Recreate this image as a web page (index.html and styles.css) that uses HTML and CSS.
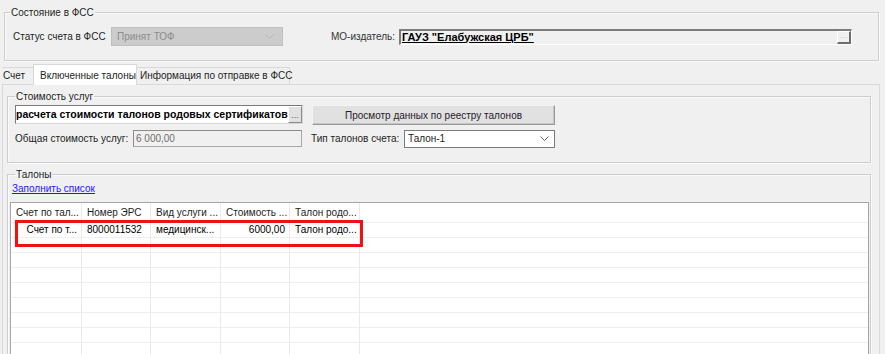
FILE: index.html
```html
<!DOCTYPE html>
<html lang="ru">
<head>
    <meta charset="UTF-8">
    <meta name="viewport" content="width=device-width, initial-scale=1.0">
    <title>Счет ФСС - Включенные талоны</title>
    <link rel="stylesheet" href="styles.css">
</head>
<body>
<div class="window">
    <fieldset class="group fss">
        <legend>Состояние в ФСС</legend>
        <div class="row">
            <span class="label status-label">Статус счета в ФСС</span>
            <div class="combo disabled status-combo">
                <span>Принят ТОФ</span>
                <svg width="9" height="5" viewBox="0 0 9 5"><polyline points="0.5,0.5 4.5,4.5 8.5,0.5" fill="none" stroke="#b4b4b4"/></svg>
            </div>
            <span class="label mo-label">МО-издатель:</span>
            <div class="field sunken mo-field">
                <span class="value bold underline">ГАУЗ "Елабужская ЦРБ"</span>
                <span class="dots-btn dim">...</span>
            </div>
        </div>
    </fieldset>

    <!-- Tabs -->
    <div class="tabs">
        <div class="tab tab-account">Счет</div>
        <div class="tab tab-talons active">Включенные талоны</div>
        <div class="tab tab-send">Информация по отправке в ФСС</div>
    </div>

    <div class="tab-page">
        <fieldset class="group cost">
            <legend>Стоимость услуг</legend>
            <div class="row row-first">
                <div class="field calc-field">
                    <span class="value bold">расчета стоимости талонов родовых сертификатов</span>
                    <span class="dots-btn">...</span>
                </div>
                <div class="btn view-btn">Просмотр данных по реестру талонов</div>
            </div>
            <div class="row row-second">
                <span class="label total-label">Общая стоимость услуг:</span>
                <div class="field readonly total-field">6 000,00</div>
                <span class="label type-label">Тип талонов счета:</span>
                <div class="combo type-combo">
                    <span>Талон-1</span>
                    <svg width="9" height="5" viewBox="0 0 9 5"><polyline points="0.5,0.5 4.5,4.5 8.5,0.5" fill="none" stroke="#606060"/></svg>
                </div>
            </div>
        </fieldset>

        <fieldset class="group talons">
            <legend>Талоны</legend>
            <a class="link" href="#">Заполнить список</a>
            <div class="grid">
                <table>
                    <colgroup>
                        <col class="c1"><col class="c2"><col class="c3"><col class="c4"><col class="c5"><col>
                    </colgroup>
                    <thead>
                        <tr>
                            <th>Счет по тал...</th>
                            <th>Номер ЭРС</th>
                            <th>Вид услуги ...</th>
                            <th>Стоимость ...</th>
                            <th>Талон родо...</th>
                            <th class="filler"></th>
                        </tr>
                    </thead>
                    <tbody>
                        <tr>
                            <td class="num">Счет по т...</td>
                            <td>8000011532</td>
                            <td>медицинск...</td>
                            <td class="num">6000,00</td>
                            <td>Талон родо...</td>
                            <td class="filler"></td>
                        </tr>
                        <tr><td></td><td></td><td></td><td></td><td></td><td class="filler"></td></tr>
                        <tr><td></td><td></td><td></td><td></td><td></td><td class="filler"></td></tr>
                        <tr><td></td><td></td><td></td><td></td><td></td><td class="filler"></td></tr>
                        <tr><td></td><td></td><td></td><td></td><td></td><td class="filler"></td></tr>
                        <tr><td></td><td></td><td></td><td></td><td></td><td class="filler"></td></tr>
                        <tr><td></td><td></td><td></td><td></td><td></td><td class="filler"></td></tr>
                        <tr><td></td><td></td><td></td><td></td><td></td><td class="filler"></td></tr>
                        <tr><td></td><td></td><td></td><td></td><td></td><td class="filler"></td></tr>
                    </tbody>
                </table>
                <!-- red annotation frame over the first row -->
                <div class="highlight"></div>
            </div>
        </fieldset>
    </div>
</div>
</body>
</html>
```

FILE: styles.css
```css
body {
    margin: 0;
    height: 354px;
    overflow: hidden;
    background-color: #f0f0f0;
    font-family: "Liberation Sans", Arial, sans-serif;
    font-size: 10px;
    line-height: 13px;
    color: #1e1e1e;
}
.window {
    padding: 6px 6px 0 4px;
}

/* group boxes */
.group {
    margin: 0;
    border: 1px solid #cdcdcd;
    box-shadow: 1px 1px 0 #fafafa, inset 1px 1px 0 #fafafa;
    min-width: 0;
}
.group legend {
    padding: 0 1px;
    line-height: 13px;
    color: #1e1e1e;
}
.fss {
    padding: 8px 8px 14px 8px;
}
.fss legend {
    margin-left: -3px;
}
.row {
    display: flex;
    align-items: center;
}
.label {
    white-space: nowrap;
}

/* inputs */
.field {
    box-sizing: border-box;
    display: flex;
    align-items: center;
    overflow: hidden;
    white-space: nowrap;
    background-color: #fff;
    border: 1px solid #7a7a7a;
    border-right-color: #d8d8d8;
    border-bottom-color: #d8d8d8;
}
.field .value {
    flex: 1;
    overflow: hidden;
    padding-left: 1px;
}
.bold {
    font-weight: bold;
    color: #000;
}
.underline {
    text-decoration: underline;
}
.mo-field .value {
    font-size: 11px;
}
.dots-btn {
    box-sizing: border-box;
    width: 14px;
    height: 100%;
    display: flex;
    align-items: flex-end;
    justify-content: center;
    line-height: 9px;
    padding-bottom: 2px;
    font-size: 9px;
    color: #505050;
    background-color: #e1e1e1;
    border-left: 1px solid #fff;
    border-top: 1px solid #fff;
    border-right: 1px solid #8a8a8a;
    border-bottom: 1px solid #8a8a8a;
}
.dots-btn.dim {
    color: #c0c0c0;
    background-color: #f0f0f0;
    border-right: 2px solid #6e6e6e;
    border-bottom: 2px solid #6e6e6e;
}
.sunken {
    background-color: #f0f0f0;
    border-top: 2px solid #7c7c7c;
    border-left: 2px solid #7c7c7c;
    border-right: 1px solid #fff;
    border-bottom: 1px solid #fff;
}
.readonly {
    background-color: #f0f0f0;
    color: #6d6d6d;
    border: 1px solid #a8a8a8;
    border-top-color: #8c8c8c;
    border-left-color: #8c8c8c;
    padding-left: 2px;
}
.combo {
    box-sizing: border-box;
    display: flex;
    align-items: center;
    justify-content: space-between;
    padding: 0 5px 0 3px;
    background-color: #fff;
    border: 1px solid #7a7a7a;
}
.combo.disabled {
    background-color: #cccccc;
    border-color: #bfbfbf;
    color: #8d8d8d;
    padding-left: 5px;
    padding-right: 8px;
}
.btn {
    box-sizing: border-box;
    display: flex;
    align-items: center;
    justify-content: center;
    background-color: #e1e1e1;
    border: 1px solid #f4f4f4;
    border-right-color: #9a9a9a;
    border-bottom-color: #9a9a9a;
    box-shadow: inset -1px -1px 0 #c4c4c4;
    color: #2a1a2a;
    white-space: nowrap;
}

/* first group row */
.status-label {
    width: 98px;
}
.status-combo {
    width: 172px;
    height: 19px;
}
.mo-label {
    width: 68px;
    margin-left: 48px;
    color: #333;
}
.mo-field {
    width: 453px;
    height: 16px;
}

/* tabs */
.tabs {
    display: flex;
    align-items: flex-end;
    height: 20px;
    margin: 3px 0 0 -2px;
}
.tab {
    box-sizing: border-box;
    height: 17px;
    line-height: 15px;
    white-space: nowrap;
    border: 1px solid #d9d9d9;
    border-bottom: none;
    background-color: #f0f0f0;
}
.tab.active {
    position: relative;
    z-index: 1;
    height: 21px;
    margin-bottom: -1px;
    line-height: 21px;
    background-color: #fff;
    border-color: #d9d9d9;
}
.tab-account {
    width: 31px;
    padding-left: 1px;
    border-left: none;
    border-right: none;
}
.tab-talons {
    width: 104px;
    padding-left: 6px;
}
.tab-send {
    width: 153px;
    padding-left: 3px;
    border-left: none;
}
.tab-page {
    box-sizing: border-box;
    width: 878px;
    margin-left: -2px;
    padding: 5px 8px 0 4px;
    border: 1px solid #d9d9d9;
    border-bottom: none;
    height: 280px;
}

/* cost group */
.cost {
    padding: 2px 0 14px 7px;
}
.row-first {
    align-items: flex-start;
    height: 20px;
}
.calc-field {
    width: 288px;
    height: 19px;
}
.calc-field .value {
    padding-left: 0;
    font-size: 10.5px;
}
.view-btn {
    width: 243px;
    height: 20px;
    margin-left: 9px;
}
.row-second {
    height: 19px;
    margin-top: 4px;
}
.total-label {
    width: 118px;
}
.total-field {
    width: 169px;
    height: 17px;
}
.type-label {
    width: 93px;
    margin-left: 9px;
}
.type-combo {
    width: 151px;
    height: 18px;
}

/* talons group */
.talons {
    margin-top: 5px;
    padding: 1px 0 0 2px;
}
.talons legend {
    margin-left: 5px;
}
.link {
    display: inline-block;
    margin-left: 2px;
    color: #1a1aff;
    text-decoration: underline;
}
.grid {
    position: relative;
    box-sizing: border-box;
    width: 859px;
    height: 200px;
    margin-top: 7px;
    background-color: #fff;
    border: 1px solid #a4a4a4;
    overflow: hidden;
}
.grid table {
    width: 100%;
    table-layout: fixed;
    border-collapse: separate;
    border-spacing: 0;
}
.c1 { width: 71px; }
.c2 { width: 69px; }
.c3 { width: 70px; }
.c4 { width: 69px; }
.c5 { width: 70px; }
.grid th,
.grid td {
    box-sizing: border-box;
    padding: 0 4px 0 5px;
    white-space: nowrap;
    overflow: hidden;
    font-weight: normal;
    text-align: left;
    border-right: 1px solid #eaeaea;
    border-bottom: 1px solid #efefef;
}
.grid th {
    height: 20px;
    color: #1e1e1e;
}
.grid td {
    height: 15px;
    line-height: 14px;
    color: #000;
}
.grid td.num {
    text-align: right;
}
.grid .filler {
    border-right: none;
}
.highlight {
    position: absolute;
    left: 4px;
    top: 17px;
    width: 348px;
    height: 27px;
    box-sizing: border-box;
    border: 3px solid #f01212;
}
```
